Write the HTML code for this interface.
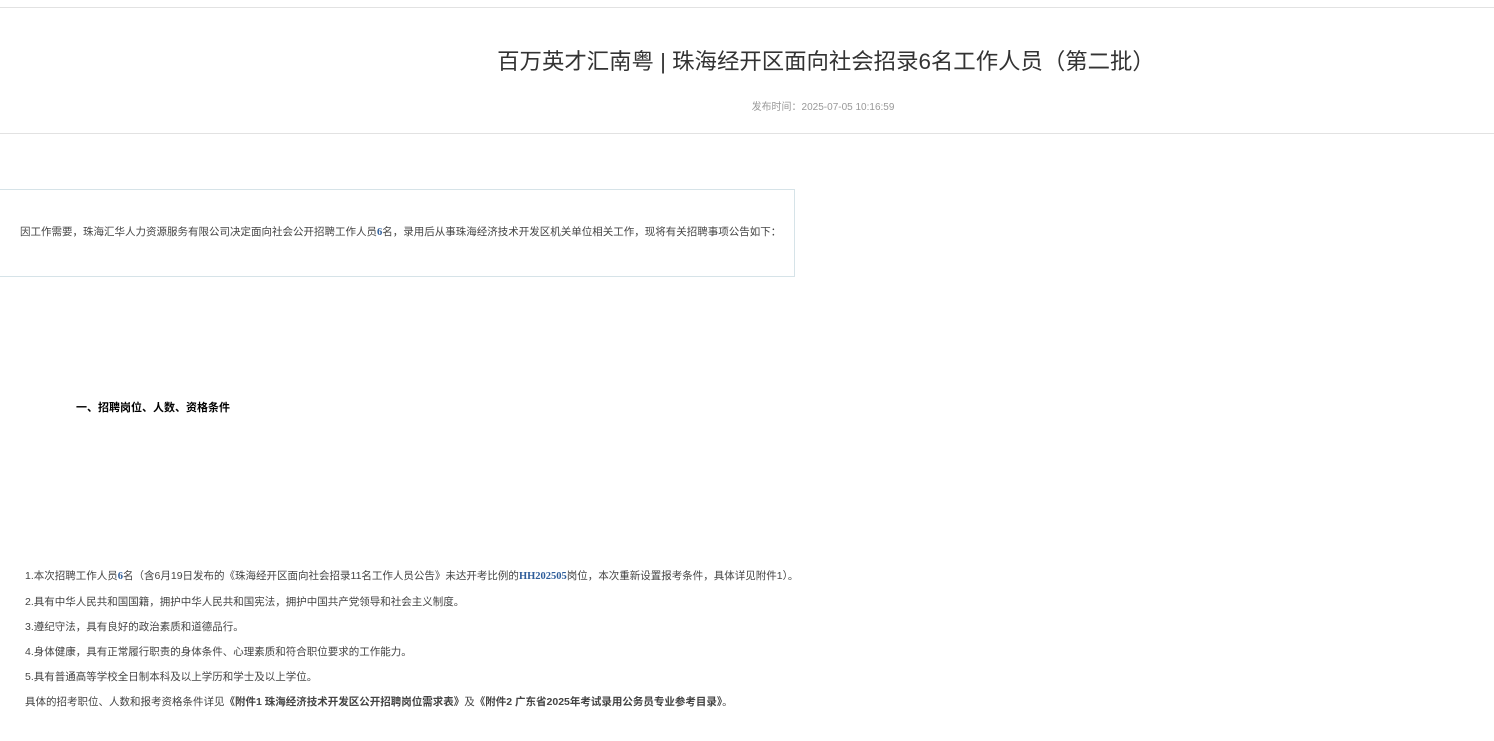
<!DOCTYPE html>
<html><head><meta charset="utf-8"><style>
body{margin:0;width:1494px;height:741px;background:#fff;font-family:"Liberation Sans","Noto Sans CJK SC",sans-serif;position:relative;overflow:hidden;color:#333}
.l{position:absolute;left:0;width:1494px;height:1px;background:#e2e2e2}
.t{position:absolute;left:0;width:1494px;text-align:center;white-space:nowrap}
.p{position:absolute;white-space:nowrap;font-size:10.5px;color:#444;line-height:12px}
b.h{color:#2e5d9a;font-family:"Liberation Serif","Noto Serif CJK SC",serif}
</style></head><body>
<div class="l" style="top:7px"></div>
<div class="t" style="top:47px;left:79px;font-size:22.4px;color:#333;line-height:30px">百万英才汇南粤 | 珠海经开区面向社会招录6名工作人员（第二批）</div>
<div class="t" style="top:98px;left:76px;font-size:10px;color:#999">发布时间：2025-07-05 10:16:59</div>
<div class="l" style="top:133px"></div>
<div style="position:absolute;left:-1px;top:189px;width:794px;height:86px;border:1px solid #d6e3e8"></div>
<div class="p" style="left:20px;top:226px">因工作需要，珠海汇华人力资源服务有限公司决定面向社会公开招聘工作人员<b class="h">6</b>名，录用后从事珠海经济技术开发区机关单位相关工作，现将有关招聘事项公告如下：</div>
<div class="p" style="left:76px;top:402px;color:#000;font-weight:bold;font-size:11px">一、招聘岗位、人数、资格条件</div>
<div class="p" style="left:25px;top:570px">1.本次招聘工作人员<b class="h">6</b>名（含6月19日发布的《珠海经开区面向社会招录11名工作人员公告》未达开考比例的<b class="h">HH202505</b>岗位，本次重新设置报考条件，具体详见附件1）。</div>
<div class="p" style="left:25px;top:596px">2.具有中华人民共和国国籍，拥护中华人民共和国宪法，拥护中国共产党领导和社会主义制度。</div>
<div class="p" style="left:25px;top:621px">3.遵纪守法，具有良好的政治素质和道德品行。</div>
<div class="p" style="left:25px;top:646px">4.身体健康，具有正常履行职责的身体条件、心理素质和符合职位要求的工作能力。</div>
<div class="p" style="left:25px;top:671px">5.具有普通高等学校全日制本科及以上学历和学士及以上学位。</div>
<div class="p" style="left:25px;top:696px">具体的招考职位、人数和报考资格条件详见<b>《附件1 珠海经济技术开发区公开招聘岗位需求表》</b>及<b>《附件2 广东省2025年考试录用公务员专业参考目录》</b>。</div>
</body></html>
